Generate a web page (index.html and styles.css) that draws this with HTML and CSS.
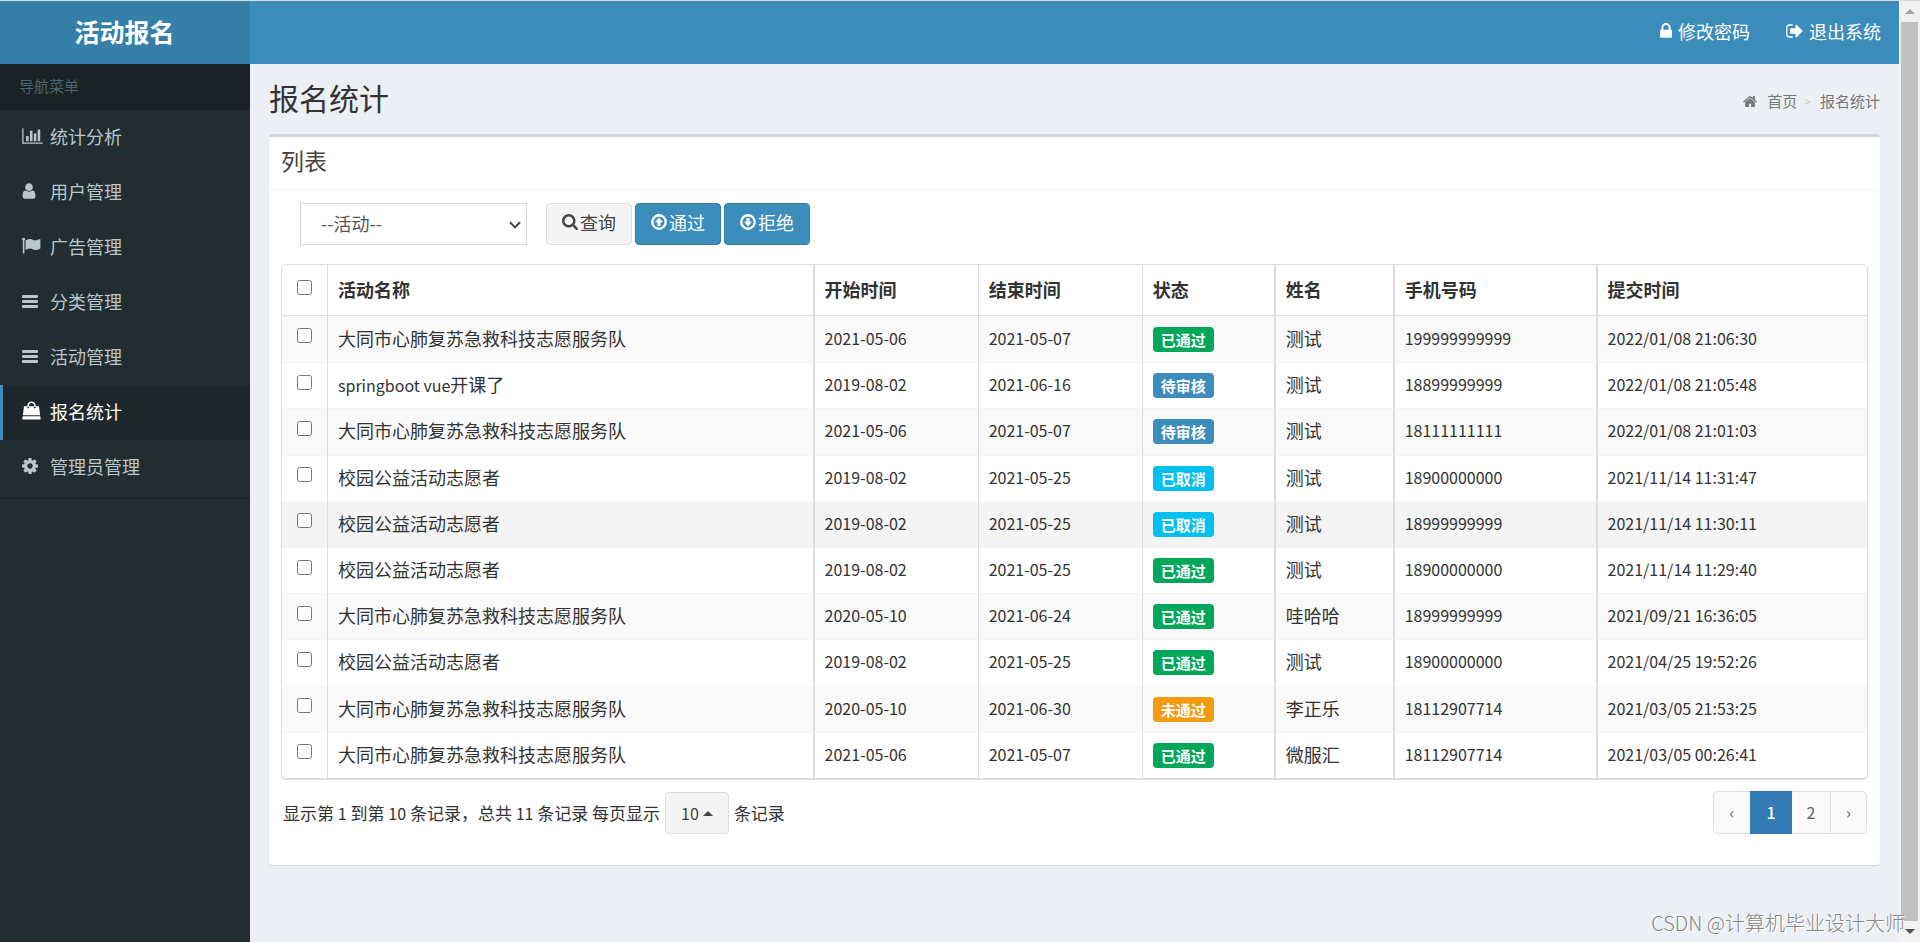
FILE: index.html
```html
<!DOCTYPE html>
<html lang="zh-CN">
<head>
<meta charset="utf-8">
<title>报名统计</title>
<link rel="stylesheet" href="styles.css">
</head>
<body>
<svg class="sprite" aria-hidden="true">
  <symbol id="i-lock" viewBox="320 128 1152 1536"><path d="M640 768h512v-192q0-106-75-181t-181-75-181 75-75 181v192zm832 96v576q0 40-28 68t-68 28h-960q-40 0-68-28t-28-68v-576q0-40 28-68t68-28h32v-192q0-184 132-316t316-132 316 132 132 316v192h32q40 0 68 28t28 68z"/></symbol>
  <symbol id="i-out" viewBox="64 128 1600 1536"><path d="M704 1440q0 4 1 20t.5 26.5-3 23.5-10 19.5-20.5 6.5h-320q-119 0-203.5-84.5t-84.5-203.5v-704q0-119 84.5-203.5t203.5-84.5h320q13 0 22.5 9.5t9.5 22.5q0 4 1 20t.5 26.5-3 23.5-10 19.5-20.5 6.5h-320q-66 0-113 47t-47 113v704q0 66 47 113t113 47h312l11.5 1 11.5 3 8 5.5 7 9 2 13.5zm928-544q0 26-19 45l-544 544q-19 19-45 19t-45-19-19-45v-288h-448q-26 0-45-19t-19-45v-384q0-26 19-45t45-19h448v-288q0-26 19-45t45-19 45 19l544 544q19 19 19 45z"/></symbol>
  <symbol id="i-home" viewBox="64 128 1664 1536"><path d="M1472 992v480q0 26-19 45t-45 19h-384v-384h-256v384h-384q-26 0-45-19t-19-45v-480q0-1 .5-3t.5-3l575-474 575 474q1 2 1 6zm223-69l-62 74q-8 9-21 11h-3q-13 0-21-7l-692-577-692 577q-12 8-24 7-13-2-21-11l-62-74q-8-10-7-23.5t11-21.5l719-599q32-26 76-26t76 26l244 204v-195q0-14 9-23t23-9h192q14 0 23 9t9 23v408l219 182q10 8 11 21.5t-7 23.5z"/></symbol>
  <symbol id="i-chart" viewBox="0 0 2048 1792"><path d="M640 896v512h-256v-512h256zm384-512v1024h-256v-1024h256zm1024 1152v128h-2048v-1536h128v1408h1920zm-640-896v768h-256v-768h256zm384-384v1152h-256v-1152h256z"/></symbol>
  <symbol id="i-user" viewBox="256 0 1280 1792"><path d="M1536 1399q0 109-62.500 187t-150.500 78h-854q-88 0-150.500-78t-62.500-187q0-85 8.500-160.500t31.500-152 58.500-131 94-89 134.500-34.500q131 128 313 128t313-128q76 0 134.500 34.500t94 89 58.500 131 31.500 152 8.500 160.500zm-256-887q0 159-112.500 271.500t-271.500 112.500-271.500-112.500-112.500-271.500 112.500-271.500 271.500-112.500 271.500 112.500 112.500 271.500z"/></symbol>
  <symbol id="i-flag" viewBox="0 0 19 18"><path d="M1.600 1.200a1.500 1.500 0 0 1 .8 2.800v12.500a.5.5 0 0 1-.5.5h-.6a.5.500 0 0 1-.5-.5V4a1.500 1.500 0 0 1 .8-2.800zM3.500 4C5 3 6.400 2.400 8 2.400c2.200 0 3.200 1.400 5.200 1.400 1.800 0 3.200-1 4.500-1.400.4 0 .7.2.7.6v8.600c0 .3-.2.500-.5.700-1.200.6-2.600 1.300-4.300 1.300-2.400 0-3.400-1.500-5.700-1.500-1.300 0-2.700.6-3.900 1.400-.3.100-.5 0-.5-.4z"/></symbol>
  <symbol id="i-bars" viewBox="0 0 16 18"><rect x="0" y="3" width="16" height="3" rx="1"/><rect x="0" y="8" width="16" height="3" rx="1"/><rect x="0" y="13" width="16" height="3" rx="1"/></symbol>
  <symbol id="i-bag" viewBox="0 0 19 19"><path d="M.9 14.300 2 5.200h3.300V7.200h1.600V5.200h5.200V7.200h1.600V5.200H17l1.100 9.100zM.7 15.200h17.600l.4 3.400H.3zM5.300 5.800V4.600a4.200 4.200 0 0 1 8.400 0v1.200h-1.600V4.600a2.600 2.600 0 0 0-5.200 0v1.200z"/></symbol>
  <symbol id="i-cog" viewBox="128 128 1536 1536"><path d="M1152 896q0-106-75-181t-181-75-181 75-75 181 75 181 181 75 181-75 75-181zm512-109v222q0 12-8 23t-20 13l-185 28q-19 54-39 91 35 50 107 138 10 12 10 25t-9 23q-27 37-99 108t-94 71q-12 0-26-9l-138-108q-44 23-91 38-16 136-29 186-7 28-36 28h-222q-14 0-24.500-8.500t-11.500-21.500l-28-184q-49-16-90-37l-141 107q-10 9-25 9-14 0-25-11-126-114-165-168-7-10-7-23 0-12 8-23 15-21 51-66.500t54-70.500q-27-50-41-99l-183-27q-13-2-21-12.500t-8-23.500v-222q0-12 8-23t19-13l186-28q14-46 39-92-40-57-107-138-10-12-10-24 0-10 9-23 26-36 98.500-107.500t94.500-71.500q13 0 26 10l138 107q44-23 91-38 16-136 29-186 7-28 36-28h222q14 0 24.500 8.500t11.500 21.500l28 184q49 16 90 37l142-107q9-9 24-9 13 0 25 10 129 119 165 170 7 8 7 22 0 12-8 23-15 21-51 66.500t-54 70.500q26 50 41 98l183 28q13 2 21 12.500t8 23.500z"/></symbol>
  <symbol id="i-search" viewBox="64 128 1664 1664"><path d="M1216 832q0-185-131.500-316.500t-316.500-131.500-316.500 131.500-131.500 316.500 131.500 316.500 316.500 131.500 316.500-131.500 131.500-316.500zm512 832q0 52-38 90t-90 38q-54 0-90-38l-343-342q-179 124-399 124-143 0-273.500-55.500t-225-150-150-225-55.500-273.500 55.500-273.500 150-225 225-150 273.500-55.500 273.500 55.500 225 150 150 225 55.500 273.500q0 220-124 399l343 343q37 37 37 90z"/></symbol>
  <symbol id="i-up" viewBox="0 0 16 16"><circle cx="8" cy="8" r="6.700" fill="none" stroke="currentColor" stroke-width="2.400"/><path d="M8 3.500 12 8.200H9.600V12H6.400V8.200H4z"/></symbol>
  <symbol id="i-down" viewBox="0 0 16 16"><circle cx="8" cy="8" r="6.700" fill="none" stroke="currentColor" stroke-width="2.400"/><path d="M8 12.500 12 7.800H9.600V4H6.400V7.800H4z"/></symbol>
  <symbol id="i-chevron" viewBox="0 0 12 8"><path d="M1 1.200 6 6.400 11 1.200" fill="none" stroke="currentColor" stroke-width="2"/></symbol>
</svg>

<div class="app">
  <header class="header">
    <a class="logo" href="#">活动报名</a>
    <nav class="topnav">
      <a href="#"><svg class="ico-lock"><use href="#i-lock"/></svg>修改密码</a>
      <a href="#"><svg class="ico-out"><use href="#i-out"/></svg>退出系统</a>
    </nav>
  </header>

  <aside class="sidebar">
    <div class="menu-title">导航菜单</div>
    <nav class="menu">
      <a href="#"><span class="slot"><svg class="m-chart"><use href="#i-chart"/></svg></span>统计分析</a>
      <a href="#"><span class="slot"><svg class="m-user"><use href="#i-user"/></svg></span>用户管理</a>
      <a href="#"><span class="slot"><svg class="m-flag"><use href="#i-flag"/></svg></span>广告管理</a>
      <a href="#"><span class="slot"><svg class="m-bars"><use href="#i-bars"/></svg></span>分类管理</a>
      <a href="#"><span class="slot"><svg class="m-bars"><use href="#i-bars"/></svg></span>活动管理</a>
      <a class="active" href="#"><span class="slot"><svg class="m-flag"><use href="#i-bag"/></svg></span>报名统计</a>
      <a href="#"><span class="slot"><svg class="m-cog"><use href="#i-cog"/></svg></span>管理员管理</a>
    </nav>
  </aside>

  <main class="content">
    <div class="page-head">
      <h1>报名统计</h1>
      <nav class="crumbs">
        <svg class="ico-home"><use href="#i-home"/></svg>
        <a href="#">首页</a><span class="sep">&gt;</span><span>报名统计</span>
      </nav>
    </div>

    <section class="box">
      <h2>列表</h2>
      <div class="box-body">
        <form class="tools">
          <div class="pick">
            <select aria-label="活动"><option>--活动--</option></select>
            <svg class="chevron"><use href="#i-chevron"/></svg>
          </div>
          <div class="btns">
            <button type="button" class="btn"><svg><use href="#i-search"/></svg>查询</button>
            <button type="button" class="btn primary"><svg><use href="#i-up"/></svg>通过</button>
            <button type="button" class="btn primary"><svg><use href="#i-down"/></svg>拒绝</button>
          </div>
        </form>

        <table class="grid">
          <colgroup><col class="c-check"><col class="c-name"><col class="c-date"><col class="c-date"><col class="c-state"><col class="c-person"><col class="c-phone"><col></colgroup>
          <thead>
            <tr><th class="check"><input type="checkbox" aria-label="全选"></th><th class="thick">活动名称</th><th>开始时间</th><th>结束时间</th><th class="thick">状态</th><th class="thick">姓名</th><th class="thick">手机号码</th><th>提交时间</th></tr>
          </thead>
          <tbody>
            <tr><td class="check"><input type="checkbox" aria-label="选择第1行"></td><td class="thick">大同市心肺复苏急救科技志愿服务队</td><td class="num">2021-05-06</td><td class="num">2021-05-07</td><td class="state thick"><span class="tag ok">已通过</span></td><td class="thick">测试</td><td class="num thick">199999999999</td><td class="num">2022/01/08 21:06:30</td></tr>
            <tr><td class="check"><input type="checkbox" aria-label="选择第2行"></td><td class="thick"><span class="num">springboot vue</span>开课了</td><td class="num">2019-08-02</td><td class="num">2021-06-16</td><td class="state thick"><span class="tag wait">待审核</span></td><td class="thick">测试</td><td class="num thick">18899999999</td><td class="num">2022/01/08 21:05:48</td></tr>
            <tr><td class="check"><input type="checkbox" aria-label="选择第3行"></td><td class="thick">大同市心肺复苏急救科技志愿服务队</td><td class="num">2021-05-06</td><td class="num">2021-05-07</td><td class="state thick"><span class="tag wait">待审核</span></td><td class="thick">测试</td><td class="num thick">18111111111</td><td class="num">2022/01/08 21:01:03</td></tr>
            <tr><td class="check"><input type="checkbox" aria-label="选择第4行"></td><td class="thick">校园公益活动志愿者</td><td class="num">2019-08-02</td><td class="num">2021-05-25</td><td class="state thick"><span class="tag off">已取消</span></td><td class="thick">测试</td><td class="num thick">18900000000</td><td class="num">2021/11/14 11:31:47</td></tr>
            <tr class="hovered"><td class="check"><input type="checkbox" aria-label="选择第5行"></td><td class="thick">校园公益活动志愿者</td><td class="num">2019-08-02</td><td class="num">2021-05-25</td><td class="state thick"><span class="tag off">已取消</span></td><td class="thick">测试</td><td class="num thick">18999999999</td><td class="num">2021/11/14 11:30:11</td></tr>
            <tr><td class="check"><input type="checkbox" aria-label="选择第6行"></td><td class="thick">校园公益活动志愿者</td><td class="num">2019-08-02</td><td class="num">2021-05-25</td><td class="state thick"><span class="tag ok">已通过</span></td><td class="thick">测试</td><td class="num thick">18900000000</td><td class="num">2021/11/14 11:29:40</td></tr>
            <tr><td class="check"><input type="checkbox" aria-label="选择第7行"></td><td class="thick">大同市心肺复苏急救科技志愿服务队</td><td class="num">2020-05-10</td><td class="num">2021-06-24</td><td class="state thick"><span class="tag ok">已通过</span></td><td class="thick">哇哈哈</td><td class="num thick">18999999999</td><td class="num">2021/09/21 16:36:05</td></tr>
            <tr><td class="check"><input type="checkbox" aria-label="选择第8行"></td><td class="thick">校园公益活动志愿者</td><td class="num">2019-08-02</td><td class="num">2021-05-25</td><td class="state thick"><span class="tag ok">已通过</span></td><td class="thick">测试</td><td class="num thick">18900000000</td><td class="num">2021/04/25 19:52:26</td></tr>
            <tr><td class="check"><input type="checkbox" aria-label="选择第9行"></td><td class="thick">大同市心肺复苏急救科技志愿服务队</td><td class="num">2020-05-10</td><td class="num">2021-06-30</td><td class="state thick"><span class="tag fail">未通过</span></td><td class="thick">李正乐</td><td class="num thick">18112907714</td><td class="num">2021/03/05 21:53:25</td></tr>
            <tr><td class="check"><input type="checkbox" aria-label="选择第10行"></td><td class="thick">大同市心肺复苏急救科技志愿服务队</td><td class="num">2021-05-06</td><td class="num">2021-05-07</td><td class="state thick"><span class="tag ok">已通过</span></td><td class="thick">微服汇</td><td class="num thick">18112907714</td><td class="num">2021/03/05 00:26:41</td></tr>
          </tbody>
        </table>

        <div class="foot">
          <div class="info"><span>显示第 <span class="num">1</span> 到第 <span class="num">10</span> 条记录，总共 <span class="num">11</span> 条记录 每页显示</span><button type="button" class="size">10<i class="caret"></i></button><span>条记录</span></div>
          <nav class="pager" aria-label="分页"><a href="#">‹</a><a class="on" href="#">1</a><a href="#">2</a><a href="#">›</a></nav>
        </div>
      </div>
    </section>
  </main>

  <div class="scroll" aria-hidden="true"><i class="up"></i><div class="thumb"></div><i class="down"></i></div>
  <div class="mark">CSDN @计算机毕业设计大师</div>
</div>
</body>
</html>
```

FILE: styles.css
```css
* { box-sizing: border-box; }
body { margin: 0; font: 18px/26px "Noto Sans CJK SC", sans-serif; color: #333; background: #ecf0f5; }
a { color: inherit; text-decoration: none; }
svg { display: block; fill: currentColor; flex: none; }
.sprite { position: absolute; width: 0; height: 0; }

.app { position: relative; display: grid; grid-template-columns: 250px minmax(0, 1fr) 21px; grid-template-rows: 63px 1fr; min-height: 100vh; border-top: 1px solid #dcdcdc; }

.header { grid-column: 1 / 3; display: flex; background: #3c8dbc; color: #fff; }
.logo { width: 250px; padding-right: 1px; background: #367fa9; font-size: 25px; font-weight: 700; line-height: 61px; text-align: center; }
.topnav { flex: 1; display: flex; justify-content: flex-end; align-items: center; gap: 36px; padding: 0 18px 4px 0; }
.topnav a { display: flex; align-items: center; gap: 6px; }
.ico-lock { width: 12px; height: 16px; }
.ico-out { width: 17px; height: 16px; }

.sidebar { background: #222d32; color: #b8c7ce; }
.menu-title { height: 46px; padding-left: 19px; background: #1a2226; color: #4b646f; font-size: 15px; line-height: 44px; }
.menu { border-bottom: 1px solid #1a2226; padding-bottom: 3px; }
.menu a { display: flex; align-items: center; height: 55px; padding: 0 0 4px 19px; border-left: 3px solid transparent; }
.menu a.active { background: #1e282c; border-left-color: #3c8dbc; color: #fff; }
.slot { width: 28px; }
.m-chart { width: 21px; height: 18px; }
.m-user { width: 14px; height: 18px; }
.m-flag { width: 19px; height: 19px; }
.m-bars { width: 16px; height: 18px; }
.m-cog { width: 16px; height: 16px; }

.content { padding: 0 19px; }
.page-head { display: flex; justify-content: space-between; align-items: center; height: 70px; padding-bottom: 4px; }
h1 { margin: 0; font-size: 30px; font-weight: 400; line-height: 40px; }
.crumbs { display: flex; align-items: center; padding-top: 8px; color: #777; font-size: 15px; }
.ico-home { width: 14px; height: 13px; margin-right: 10px; }
.sep { padding: 0 9px 0 7px; color: #ccc; font-size: 12px; }

.box { background: #fff; border-top: 3px solid #d2d6de; border-radius: 4px; box-shadow: 0 1px 1px rgba(0, 0, 0, .1); }
h2 { margin: 0; padding: 0 12px 5px; border-bottom: 1px solid #f4f4f4; color: #444; font-size: 23px; font-weight: 400; line-height: 47px; }
.box-body { padding: 13px 12px 31px; }
.tools { display: flex; align-items: center; gap: 19px; padding-left: 19px; }
.pick { position: relative; width: 227px; }
.pick select { appearance: none; display: block; width: 100%; height: 42px; padding: 0 20px 2px; border: 1px solid #d2d6de; border-radius: 0; background: #fff; color: #555; font: inherit; }
.chevron { position: absolute; right: 6px; top: 18px; width: 12px; height: 8px; color: #444; pointer-events: none; }
.btns { display: flex; gap: 3px; }
.btn, .size { display: flex; align-items: center; height: 42px; border: 1px solid #ddd; border-radius: 4px; background: #f4f4f4; color: #444; font: inherit; }
.btn { gap: 2px; padding: 0 15px 4px; }
.btn svg { width: 16px; height: 16px; }
.btn.primary { background: #3c8dbc; border-color: #367fa9; color: #fff; }

.grid { width: 100%; height: 516px; margin-top: 19px; table-layout: fixed; border: 1px solid #ddd; border-bottom-width: 2px; border-radius: 5px; border-collapse: separate; border-spacing: 0; }
.c-check { width: 46px; }
.c-name { width: 30.7%; }
.c-date { width: 10.35%; }
.c-state { width: 8.4%; }
.c-person { width: 7.5%; }
.c-phone { width: 12.8%; }
th, td { padding: 0 10px 3px; border-right: 1px solid #ddd; text-align: left; white-space: nowrap; }
th:last-child, td:last-child { border-right: 0; }
.thick { border-right-width: 2px; }
th { height: 51px; border-bottom: 1px solid #ddd; font-weight: 700; }
td { height: 46px; }
tbody tr + tr td { border-top: 1px solid #f4f4f4; }
tbody tr:nth-child(odd) { background: #f9f9f9; }
tbody tr.hovered { background: #f4f4f4; }
.check { padding: 0 0 7px; text-align: center; line-height: 0; }
th.check { padding-bottom: 5px; }
.check input { width: 15px; height: 15px; margin: 0; }
.state { padding-bottom: 0; }
.num { font-size: 16px; }
.tag { display: block; width: max-content; padding: 0 8px; border-radius: 4px; color: #fff; font-size: 15px; font-weight: 700; line-height: 25px; }
.ok { background: #00a65a; }
.wait { background: #3c8dbc; }
.off { background: #00c0ef; }
.fail { background: #f39c12; }

.foot { display: flex; justify-content: space-between; padding: 11px 1px 0 2px; }
.info { display: flex; align-items: center; gap: 5px; padding-top: 1px; font-size: 17px; }
.size { gap: 4px; padding: 0 15px; font-size: 16px; }
.caret { border: 5px solid transparent; border-top: 0; border-bottom-color: #444; }
.pager { display: flex; height: 43px; border: 1px solid #ddd; border-radius: 5px; background: #fafafa; color: #666; font-size: 16px; line-height: 41px; text-align: center; }
.pager a { width: 38px; }
.pager a:first-child { width: 36px; }
.pager a:last-child { width: 36px; border-left: 1px solid #ddd; }
.pager .on { width: 42px; margin: -1px 0; background: #337ab7; color: #fff; font-weight: 500; line-height: 43px; }

.scroll { grid-column: 3; grid-row: 1 / 3; display: flex; flex-direction: column; align-items: stretch; padding: 0 2px; background: #f1f1f1; }
.scroll .thumb { flex: 1; background: #c1c1c1; }
.scroll i { height: 5px; margin: 8px 4px; border: 5px solid transparent; }
.scroll .up { border-top: 0; border-bottom-color: #a3a3a3; }
.scroll .down { border-bottom: 0; border-top-color: #505050; }
.mark { position: absolute; right: 15px; bottom: 5px; color: #888; font-size: 20px; font-weight: 300; line-height: 28px; text-shadow: 1px 1px 0 #fff; }
```
